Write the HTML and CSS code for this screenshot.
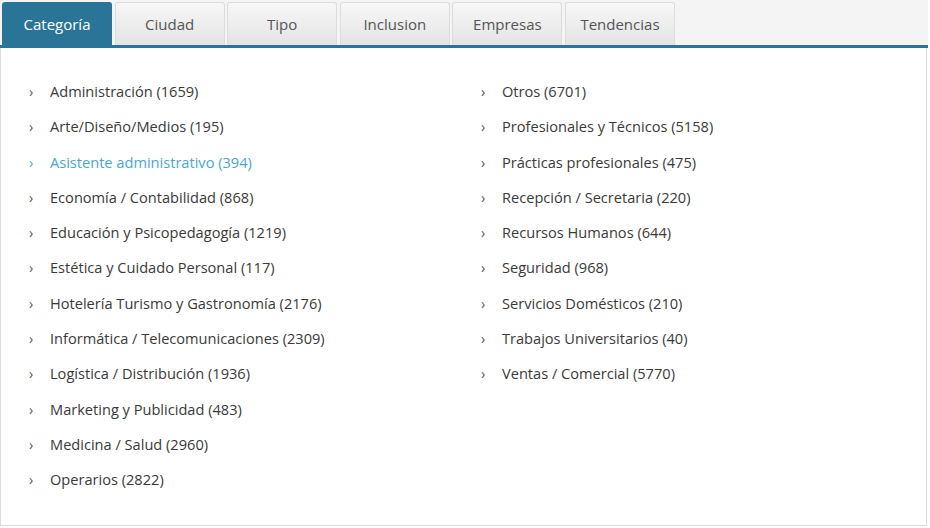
FILE: index.html
```html
<!DOCTYPE html>
<html lang="es">
<head>
<meta charset="utf-8">
<title>Categorías</title>
<link rel="stylesheet" href="styles.css">
</head>
<body>
<div class="widget">
  <ul class="tabs">
    <li class="tab active">Categoría</li>
    <li class="tab">Ciudad</li>
    <li class="tab">Tipo</li>
    <li class="tab">Inclusion</li>
    <li class="tab">Empresas</li>
    <li class="tab">Tendencias</li>
  </ul>
  <div class="panel">
    <ul class="list">
      <li><span class="chev">›</span>Administración (1659)</li>
      <li><span class="chev">›</span>Arte/Diseño/Medios (195)</li>
      <li class="hover"><span class="chev">›</span>Asistente administrativo (394)</li>
      <li><span class="chev">›</span>Economía / Contabilidad (868)</li>
      <li><span class="chev">›</span>Educación y Psicopedagogía (1219)</li>
      <li><span class="chev">›</span>Estética y Cuidado Personal (117)</li>
      <li><span class="chev">›</span>Hotelería Turismo y Gastronomía (2176)</li>
      <li><span class="chev">›</span>Informática / Telecomunicaciones (2309)</li>
      <li><span class="chev">›</span>Logística / Distribución (1936)</li>
      <li><span class="chev">›</span>Marketing y Publicidad (483)</li>
      <li><span class="chev">›</span>Medicina / Salud (2960)</li>
      <li><span class="chev">›</span>Operarios (2822)</li>
    </ul>
    <ul class="list">
      <li><span class="chev">›</span>Otros (6701)</li>
      <li><span class="chev">›</span>Profesionales y Técnicos (5158)</li>
      <li><span class="chev">›</span>Prácticas profesionales (475)</li>
      <li><span class="chev">›</span>Recepción / Secretaria (220)</li>
      <li><span class="chev">›</span>Recursos Humanos (644)</li>
      <li><span class="chev">›</span>Seguridad (968)</li>
      <li><span class="chev">›</span>Servicios Domésticos (210)</li>
      <li><span class="chev">›</span>Trabajos Universitarios (40)</li>
      <li><span class="chev">›</span>Ventas / Comercial (5770)</li>
    </ul>
  </div>
</div>
</body>
</html>
```
FILE: styles.css
```css
html, body {
  margin: 0;
  padding: 0;
  background: #ffffff;
}
body {
  font-family: "Open Sans", "DejaVu Sans", sans-serif;
  color: #333333;
}
.widget {
  width: 928px;
}
.tabs {
  list-style: none;
  margin: 0;
  padding: 2px 0 0 2px;
  display: flex;
  gap: 2.6px;
  background: #f4f4f4;
  border-bottom: 3px solid #2a7597;
  height: 43px;
  box-sizing: content-box;
}
.tab {
  width: 110px;
  height: 43px;
  box-sizing: border-box;
  border: 1px solid #dcdcdc;
  border-bottom: none;
  border-radius: 3px 3px 0 0;
  background: linear-gradient(#f7f7f7, #e4e4e4);
  color: #555555;
  font-size: 15px;
  display: flex;
  align-items: center;
  justify-content: center;
}
.tab.active {
  background: #2a7597;
  border-color: #2a7597;
  color: #ffffff;
}
.panel {
  display: flex;
  border: 1px solid #dddddd;
  border-top: none;
  height: 478px;
  box-sizing: border-box;
  width: 927px;
  padding: 26px 0 0 0;
}
.list {
  list-style: none;
  margin: 0;
  padding: 0 0 0 28px;
  width: 452px;
  box-sizing: border-box;
}
.list li {
  height: 35.3px;
  font-size: 14.6px;
  line-height: 35px;
  color: #3a3a3a;
  white-space: nowrap;
}
.list li.hover {
  color: #4aa6d3;
}
.chev {
  display: inline-block;
  width: 21px;
  font-size: 14px;
  color: #555555;
}
.list li.hover .chev {
  color: #4aa6d3;
}
```
